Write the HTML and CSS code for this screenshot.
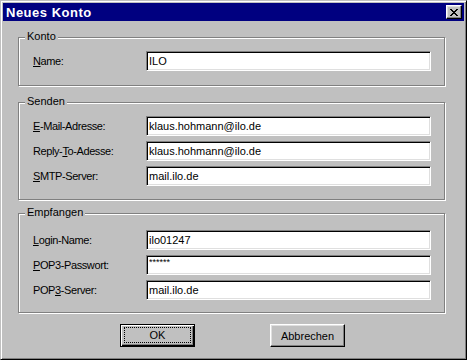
FILE: index.html
```html
<!DOCTYPE html>
<html lang="de">
<head>
    <meta charset="UTF-8">
    <title>Neues Konto</title>
    <link rel="stylesheet" href="styles.css">
</head>
<body>
    <div class="window">
        <div class="titlebar">
            <span class="title">Neues Konto</span>
            <button class="close" type="button">
                <svg width="8" height="7" viewBox="0 0 8 7" shape-rendering="crispEdges">
                    <path d="M0 0h2v1H0z M6 0h2v1H6z M1 1h2v1H1z M5 1h2v1H5z M2 2h4v1H2z M3 3h2v1H3z M2 4h4v1H2z M1 5h2v1H1z M5 5h2v1H5z M0 6h2v1H0z M6 6h2v1H6z" fill="#000"/>
                </svg>
            </button>
        </div>

        <div class="content">
            <div class="group konto">
                <span class="legend">Konto</span>
                <label><u>N</u>ame:</label>
                <input class="field" type="text" value="ILO">
            </div>

            <div class="group senden">
                <span class="legend">Senden</span>
                <label><u>E</u>-Mail-Adresse:</label>
                <input class="field" type="text" value="klaus.hohmann@ilo.de">
                <label>Reply-<u>T</u>o-Adesse:</label>
                <input class="field" type="text" value="klaus.hohmann@ilo.de">
                <label><u>S</u>MTP-Server:</label>
                <input class="field" type="text" value="mail.ilo.de">
            </div>

            <div class="group empfangen">
                <span class="legend">Empfangen</span>
                <label><u>L</u>ogin-Name:</label>
                <input class="field" type="text" value="ilo01247">
                <label><u>P</u>OP3-Passwort:</label>
                <input class="field pass" type="text" value="******">
                <label>POP<u>3</u>-Server:</label>
                <input class="field" type="text" value="mail.ilo.de">
            </div>

            <div class="buttons">
                <button class="btn default" type="button"><span class="focus">OK</span></button>
                <button class="btn" type="button">Abbrechen</button>
            </div>
        </div>
    </div>
</body>
</html>
```

FILE: styles.css
```css
* {
    margin: 0;
    padding: 0;
    box-sizing: border-box;
}

body {
    width: 467px;
    height: 360px;
    font-family: "Liberation Sans", Arial, sans-serif;
    font-size: 11px;
    color: #000;
    background: #c0c0c0;
}

.window {
    width: 467px;
    height: 360px;
    background: #c0c0c0;
    border: 1px solid;
    border-color: #c0c0c0 #000 #000 #c0c0c0;
    padding: 2px;
    box-shadow: inset 1px 1px #fff, inset -1px -1px #808080;
}

.titlebar {
    height: 18px;
    background: #000080;
    color: #fff;
    display: flex;
    align-items: center;
    justify-content: space-between;
    padding: 0 2px 0 3px;
}

.title {
    font-weight: bold;
    font-size: 13px;
    letter-spacing: 0.5px;
}

.close {
    width: 16px;
    height: 14px;
    background: #c0c0c0;
    border: 1px solid;
    border-color: #fff #000 #000 #fff;
    box-shadow: inset -1px -1px #808080, inset 1px 1px #dfdfdf;
    display: flex;
    align-items: center;
    justify-content: center;
}

.close svg {
    display: block;
}

.content {
    padding-left: 15px;
}

.group {
    position: relative;
    width: 427px;
    border: 1px solid #808080;
    box-shadow: 1px 1px 0 #fff, inset 1px 1px 0 #fff;
    display: grid;
    grid-template-columns: 113px 285px;
    row-gap: 5px;
    align-items: center;
    padding: 13px 13px 13px 14px;
}

.konto {
    margin-top: 16px;
    padding-bottom: 14px;
}

.senden {
    margin-top: 16px;
}

.empfangen {
    margin-top: 13px;
    padding-top: 16px;
    padding-bottom: 12px;
}

.legend {
    position: absolute;
    top: -8px;
    left: 6px;
    padding: 0 2px;
    background: #c0c0c0;
    line-height: 13px;
}

.group label {
    letter-spacing: -0.4px;
    white-space: nowrap;
}

.field {
    height: 20px;
    width: 285px;
    background: #fff;
    border: 1px solid;
    border-color: #808080 #fff #fff #808080;
    box-shadow: inset 1px 1px #000, inset -1px -1px #dfdfdf;
    padding: 0 2px;
    font-family: "Liberation Sans", Arial, sans-serif;
    font-size: 11px;
    color: #000;
    outline: none;
}

.field.pass {
    font-size: 9px;
    padding-bottom: 6px;
}

.buttons {
    display: flex;
    gap: 75px;
    margin-top: 11px;
    padding-left: 102px;
}

.btn {
    width: 75px;
    height: 23px;
    background: #c0c0c0;
    border: 1px solid;
    border-color: #fff #000 #000 #fff;
    box-shadow: inset -1px -1px #808080, inset 1px 1px #dfdfdf;
    font-family: "Liberation Sans", Arial, sans-serif;
    font-size: 11px;
    color: #000;
}

.btn.default {
    border-color: #000;
    box-shadow: inset 1px 1px #fff, inset -1px -1px #000, inset -2px -2px #808080;
    display: flex;
    padding: 2px 3px 3px 3px;
}

.focus {
    flex: 1;
    border: 1px dotted #000;
    display: flex;
    align-items: center;
    justify-content: center;
}
```
